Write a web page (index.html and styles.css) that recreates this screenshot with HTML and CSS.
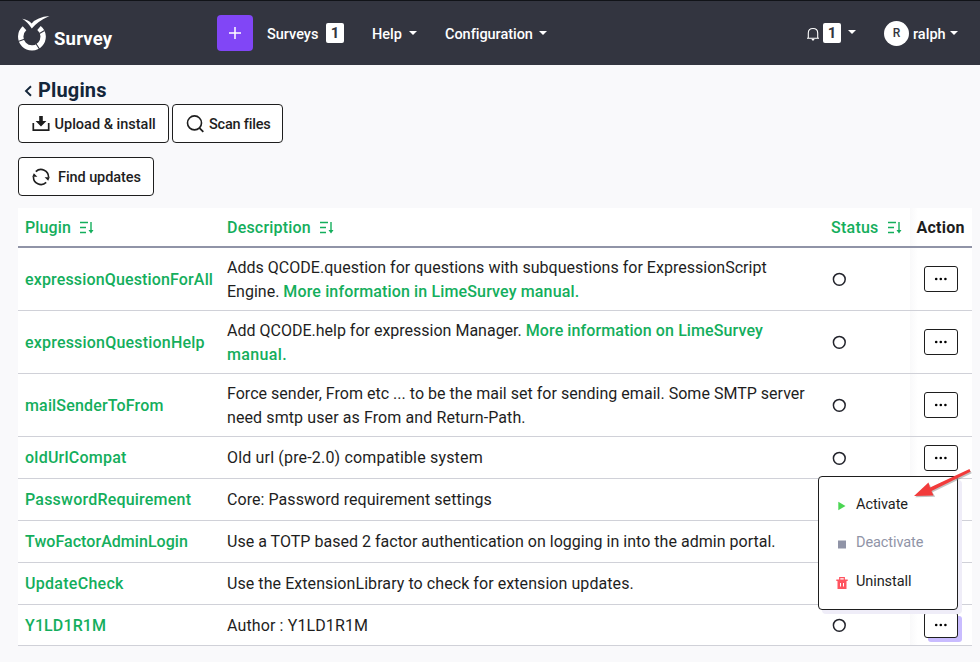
FILE: index.html
```
<!DOCTYPE html>
<html lang="en">
<head>
<meta charset="utf-8">
<title>Plugins</title>
<link rel="stylesheet" href="styles.css">
</head>
<body>
<svg class="defs" aria-hidden="true">
  <symbol id="sort" viewBox="0 0 16 14"><path d="M1 1.500h8M1 6.500h6M1 11.500h6M12 1v9" fill="none" stroke="currentColor" stroke-width="1.400"/><path d="M9.500 9h5L12 12.600z" fill="currentColor"/></symbol>
  <symbol id="dots" viewBox="0 0 14 4"><circle cx="2.200" cy="2" r="1.300"/><circle cx="6.800" cy="2" r="1.300"/><circle cx="11.400" cy="2" r="1.300"/></symbol>
  <symbol id="ring" viewBox="0 0 14 14"><circle cx="7.300" cy="7.300" r="5.900" fill="none" stroke="#22232b" stroke-width="1.500"/></symbol>
</svg>
<header class="navbar">
  <a class="brand">
    <svg class="logo" viewBox="0 0 32 36"><path d="M6.500 13.300A11.200 11.200 0 1 0 21 13" fill="none" stroke="#fff" stroke-width="5.400"/><path d="M4.200 3.800Q10.500 5 13.600 8.500Q19 2 31.500 1Q20 6 13.800 13.500Q9.500 7 4.200 3.800z" fill="#fff"/><path d="M0 26.500l7-2.500M17.500 28l4 6M21.500 18.500l5-3" stroke="#333540" stroke-width="1.100"/></svg>
    <span class="brand-name">Survey</span>
  </a>
  <a class="add"><svg viewBox="0 0 14 14"><path d="M7 1v12M1 7h12" stroke="#fff" stroke-width="1.500"/></svg></a>
  <a class="nav surveys">Surveys</a><span class="count">1</span>
  <a class="nav help">Help</a><i class="caret"></i>
  <a class="nav config">Configuration</a><i class="caret"></i>
  <div class="right">
    <svg class="bell" viewBox="0 0 14 14"><path d="M1 11.300h12M2.300 11V6Q2.300 1.500 7 1.500T11.700 6V11" fill="none" stroke="#fff" stroke-width="1.100"/><path d="M5.300 12h3.400L7 13.900z" fill="#fff"/></svg>
    <span class="count">1</span><i class="caret bell-caret"></i>
    <span class="avatar">R</span><span class="nav user">ralph</span><i class="caret user-caret"></i>
  </div>
</header>
<main>
  <h1><svg viewBox="0 0 8 12"><path d="M7 1.200L2 6l5 4.800" fill="none" stroke="currentColor" stroke-width="1.900"/></svg><span>Plugins</span></h1>
  <div class="tools">
    <a class="btn upload"><svg viewBox="0 0 18 18"><path d="M1.300 8v7.200h15.400V8" fill="none" stroke="currentColor" stroke-width="1.700"/><path d="M7.200 1h3.600v5h3.600L9 11.500 3.600 6h3.600z" fill="currentColor"/></svg><span>Upload &amp; install</span></a>
    <a class="btn scan"><svg viewBox="0 0 18 18"><circle cx="8.500" cy="7.900" r="7" fill="none" stroke="currentColor" stroke-width="1.600"/><path d="M13.300 12.800l4 4" stroke="currentColor" stroke-width="1.800"/></svg><span>Scan files</span></a>
    <a class="btn find"><svg viewBox="0 0 18 18"><path d="M3.800 3.600A7.500 7.500 0 0 1 16.500 9.500M14.200 14.400A7.500 7.500 0 0 1 1.500 8.500" fill="none" stroke="currentColor" stroke-width="1.600"/><path d="M12.600 9.200h5.100l-1.500 3.600zM.3 8.800h5.100L1.800 5.200z" fill="currentColor"/></svg><span>Find updates</span></a>
  </div>
  <table>
    <thead><tr>
      <th class="c-name"><span class="h-plugin">Plugin</span><svg class="sort"><use href="#sort"/></svg></th>
      <th class="c-desc"><span class="h-desc">Description</span><svg class="sort"><use href="#sort"/></svg></th>
      <th class="c-status"><span class="h-status">Status</span><svg class="sort"><use href="#sort"/></svg></th>
      <th class="c-action"><span class="h-action">Action</span></th>
    </tr></thead>
    <tbody>
      <tr class="tall"><td><a class="n1">expressionQuestionForAll</a></td><td><span class="d1">Adds QCODE.question for questions with subquestions for ExpressionScript</span><br><span class="d1b">Engine.</span> <a class="l1">More information in LimeSurvey manual.</a></td><td><svg class="ring"><use href="#ring"/></svg></td><td class="act"><button><svg><use href="#dots"/></svg></button></td></tr>
      <tr class="tall"><td><a class="n2">expressionQuestionHelp</a></td><td><span class="d2">Add QCODE.help for expression Manager.</span> <a class="l2">More information on LimeSurvey</a><br><a class="l2b">manual.</a></td><td><svg class="ring"><use href="#ring"/></svg></td><td class="act"><button><svg><use href="#dots"/></svg></button></td></tr>
      <tr class="tall"><td><a class="n3">mailSenderToFrom</a></td><td><span class="d3">Force sender, From etc ... to be the mail set for sending email. Some SMTP server</span><br><span class="d3b">need smtp user as From and Return-Path.</span></td><td><svg class="ring"><use href="#ring"/></svg></td><td class="act"><button><svg><use href="#dots"/></svg></button></td></tr>
      <tr><td><a class="n4">oldUrlCompat</a></td><td><span class="d4">Old url (pre-2.0) compatible system</span></td><td><svg class="ring"><use href="#ring"/></svg></td><td class="act"><button><svg><use href="#dots"/></svg></button></td></tr>
      <tr><td><a class="n5">PasswordRequirement</a></td><td><span class="d5">Core: Password requirement settings</span></td><td></td><td class="act"></td></tr>
      <tr><td><a class="n6">TwoFactorAdminLogin</a></td><td><span class="d6">Use a TOTP based 2 factor authentication on logging in into the admin portal.</span></td><td></td><td class="act"></td></tr>
      <tr><td><a class="n7">UpdateCheck</a></td><td><span class="d7">Use the ExtensionLibrary to check for extension updates.</span></td><td></td><td class="act"></td></tr>
      <tr class="last"><td><a class="n8">Y1LD1R1M</a></td><td><span class="d8">Author : Y1LD1R1M</span></td><td><svg class="ring"><use href="#ring"/></svg></td><td class="act"><button class="open"><svg><use href="#dots"/></svg></button></td></tr>
    </tbody>
  </table>
</main>
<div class="menu">
  <a><svg viewBox="0 0 12 12"><path d="M2.300 1.800L9.500 6 2.300 10.200z" fill="#4bd653"/></svg><span class="m1">Activate</span></a>
  <a class="off"><svg viewBox="0 0 12 12"><path d="M2 1.500h8v8H2z" fill="#9094a7"/></svg><span class="m2">Deactivate</span></a>
  <a><svg viewBox="0 0 12 12"><path d="M3.700 3V.7h4.600V3" fill="none" stroke="#ff5460" stroke-width="1.200"/><path d="M.3 2.500h11.400v1.600H10.500V12h-9V4.100H.3z" fill="#ff5460"/><path d="M4.500 6v3.500M7.500 6v3.500" stroke="#fff"/></svg><span class="m3">Uninstall</span></a>
</div>
<svg class="arrow" viewBox="0 0 60 34"><path d="M57 2L18 20.500 16 15.500 1.500 28.500 21.500 28 18.800 23.500 58 4.500z" fill="#777" opacity=".45" transform="translate(.7 .8)"/><path d="M56.500 1L17 19.500 15.500 14.500 1 28 20.500 27.500 18.500 23 57.500 3.800z" fill="#f23b3b"/></svg>
</body>
</html>
```
FILE: styles.css
```
* { box-sizing: border-box; }
body { margin: 0; height: 662px; overflow: hidden; background: #f9f9fb; color: #1e1e1e; font-family: Roboto, "Noto Sans", sans-serif; font-size: 16px; line-height: 24px; position: relative; }
.defs { position: absolute; width: 0; height: 0; }
svg { display: block; flex: none; }
.navbar { height: 65px; background: #333540; border-top: 1px solid #111318; display: flex; align-items: center; color: #fff; white-space: nowrap; }
.brand { display: flex; width: 199px; margin-left: 18px; height: 64px; padding-top: 14px; }
.logo { width: 32px; height: 36px; }
.brand-name { font-size: 18.500px; font-weight: 700; margin: 12px 0 0 4px; letter-spacing: .2px; }
.add { width: 36px; height: 36px; background: #8146f6; border-radius: 4px; display: flex; align-items: center; justify-content: center; margin-right: 14px; }
.add svg { width: 14px; height: 14px; }
.nav { font-size: 14.500px; font-weight: 500; padding-top: 3px; }
.surveys { width: 59px; }
.help { width: 37px; margin-left: 28px; }
.config { width: 94px; margin-left: 28px; letter-spacing: -.04px; }
.count { width: 18px; height: 20px; background: #fff; color: #333540; border-radius: 2px; font-weight: 700; font-size: 15px; line-height: 20px; text-align: center; }
.caret { width: 0; height: 0; border: 4px solid transparent; border-top-color: #fff; border-bottom: 0; }
.right { display: flex; align-items: center; margin-left: auto; padding-right: 22px; }
.bell { width: 14px; height: 14px; margin: 2px 3px 0 0; }
.bell-caret { margin: -2px 28px 0 7px; }
.avatar { width: 25px; height: 25px; border-radius: 50%; background: #fff; color: #333540; font-size: 12px; line-height: 25px; text-align: center; font-weight: 500; margin-right: 4px; }
.user { width: 37px; }
main { padding: 13px 8px 0 18px; }
h1 { margin: 0; height: 26px; display: flex; align-items: center; font-size: 20px; font-weight: 700; color: #14263a; padding: 0 0 2px 6px; letter-spacing: .15px; }
h1 svg { width: 8px; height: 12px; margin: 2px 6px 0 0; }
.tools { display: flex; flex-wrap: wrap; gap: 14px 3px; width: 300px; }
.btn { height: 39px; border: 1px solid #1e1e1e; border-radius: 4px; background: #fff; display: flex; align-items: center; font-size: 14.500px; font-weight: 500; padding-left: 13px; white-space: nowrap; }
.btn span { padding-top: 2px; }
.btn svg { width: 18px; height: 18px; }
.upload { width: 151px; } .upload span { margin-left: 4.500px; }
.scan { width: 111px; } .scan span { margin-left: 5px; letter-spacing: -.2px; }
.find { width: 136px; } .find span { margin-left: 8px; letter-spacing: -.08px; }
table { width: 954px; margin-top: 12px; table-layout: fixed; border-collapse: separate; border-spacing: 0; background: #fff; }
th { height: 40px; padding: 2px 7px 0; border-bottom: 2px solid #9094a7; text-align: left; font-weight: 500; color: #14ae5c; white-space: nowrap; }
th span, th svg { display: inline-block; vertical-align: middle; }
.sort { width: 16px; height: 14px; margin-left: 8px; }
.h-plugin { letter-spacing: .12px; } .h-desc { letter-spacing: .2px; } .h-status { letter-spacing: .25px; } .h-action { letter-spacing: .25px; }
.c-name { width: 202px; } .c-desc { width: 604px; } .c-status { width: 86px; }
.c-action { width: 62px; color: #1e1e1e; font-weight: 700; padding: 2px 0 0 6.500px; background: linear-gradient(90deg, #f9f9fa, #fff 8px); }
td { height: 42px; padding: 0 7px; border-bottom: 1px solid #d0d1d8; vertical-align: middle; white-space: nowrap; }
.tall td { height: 63px; }
.tall td:nth-child(-n+2) { padding-top: 2px; }
.last td { height: 41px; }
.last td:nth-child(-n+2) { padding-top: 2px; }
td a { color: #14ae5c; font-weight: 500; }
.n1 { letter-spacing: .15px; } .n2 { letter-spacing: .2px; } .n3 { letter-spacing: .16px; } .n4 { letter-spacing: .24px; }
.n5 { letter-spacing: .21px; } .n6 { letter-spacing: .05px; } .n7 { letter-spacing: .28px; } .n8 { letter-spacing: .12px; }
.d1 { letter-spacing: .02px; } .d3 { letter-spacing: .02px; } .d3b { letter-spacing: .1px; } .d4 { letter-spacing: .17px; }
.d5 { letter-spacing: .06px; } .d6 { letter-spacing: .02px; } .d7 { letter-spacing: .07px; } .d8 { letter-spacing: .12px; }
.l1 { letter-spacing: .14px; } .l2 { letter-spacing: .1px; } .l2b { letter-spacing: .35px; }
.ring { width: 14px; height: 14px; margin-left: 1px; }
.act { padding: 0 0 0 14px; background: linear-gradient(90deg, #f9f9fa, #fff 8px); }
button { display: flex; align-items: center; justify-content: center; width: 34px; height: 26px; padding: 0; background: #fff; border: 1px solid #1e1e1e; border-radius: 3px; color: #1e1e1e; }
button svg { width: 14px; height: 4px; }
.open { box-shadow: 4px 4px 0 #c9bcff; }
.menu { position: absolute; left: 818px; top: 476px; width: 140px; height: 134px; padding: 8px 0 10px 17px; background: #fff; border: 1px solid #1e1e1e; border-radius: 4px; box-shadow: 4px 4px 0 #efedf8; font-size: 14.500px; }
.menu a { display: flex; align-items: center; height: 38.500px; }
.menu span { padding-top: 1px; letter-spacing: -.08px; }
.menu svg { width: 12px; height: 12px; margin: 4px 8px 0 0; }
.off { color: #9094a7; }
.arrow { position: absolute; left: 913px; top: 468px; width: 60px; height: 34px; }
```
